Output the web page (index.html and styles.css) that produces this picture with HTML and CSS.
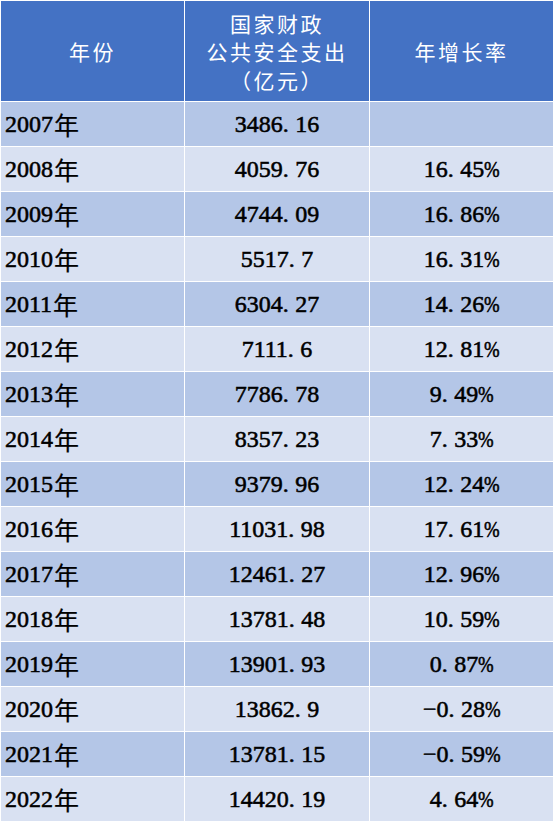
FILE: index.html
```html
<!DOCTYPE html>
<html lang="zh-CN">
<head>
<meta charset="utf-8">
<title>国家财政公共安全支出</title>
<link rel="stylesheet" href="styles.css">
</head>
<body>
<div class="sheet">
  <div class="hd">年份</div>
  <div class="hd hd-multi"><span class="ln">国家财政</span><span class="ln">公共安全支出</span><span class="ln">（亿元）</span></div>
  <div class="hd">年增长率</div>

  <div class="c y odd">2007<span class="cn">年</span></div><div class="c n odd">3486<span class="dot">.</span>16</div><div class="c n odd"></div>
  <div class="c y even">2008<span class="cn">年</span></div><div class="c n even">4059<span class="dot">.</span>76</div><div class="c n even">16<span class="dot">.</span>45<span class="pct">%</span></div>
  <div class="c y odd">2009<span class="cn">年</span></div><div class="c n odd">4744<span class="dot">.</span>09</div><div class="c n odd">16<span class="dot">.</span>86<span class="pct">%</span></div>
  <div class="c y even">2010<span class="cn">年</span></div><div class="c n even">5517<span class="dot">.</span>7</div><div class="c n even">16<span class="dot">.</span>31<span class="pct">%</span></div>
  <div class="c y odd">2011<span class="cn">年</span></div><div class="c n odd">6304<span class="dot">.</span>27</div><div class="c n odd">14<span class="dot">.</span>26<span class="pct">%</span></div>
  <div class="c y even">2012<span class="cn">年</span></div><div class="c n even">7111<span class="dot">.</span>6</div><div class="c n even">12<span class="dot">.</span>81<span class="pct">%</span></div>
  <div class="c y odd">2013<span class="cn">年</span></div><div class="c n odd">7786<span class="dot">.</span>78</div><div class="c n odd">9<span class="dot">.</span>49<span class="pct">%</span></div>
  <div class="c y even">2014<span class="cn">年</span></div><div class="c n even">8357<span class="dot">.</span>23</div><div class="c n even">7<span class="dot">.</span>33<span class="pct">%</span></div>
  <div class="c y odd">2015<span class="cn">年</span></div><div class="c n odd">9379<span class="dot">.</span>96</div><div class="c n odd">12<span class="dot">.</span>24<span class="pct">%</span></div>
  <div class="c y even">2016<span class="cn">年</span></div><div class="c n even">11031<span class="dot">.</span>98</div><div class="c n even">17<span class="dot">.</span>61<span class="pct">%</span></div>
  <div class="c y odd">2017<span class="cn">年</span></div><div class="c n odd">12461<span class="dot">.</span>27</div><div class="c n odd">12<span class="dot">.</span>96<span class="pct">%</span></div>
  <div class="c y even">2018<span class="cn">年</span></div><div class="c n even">13781<span class="dot">.</span>48</div><div class="c n even">10<span class="dot">.</span>59<span class="pct">%</span></div>
  <div class="c y odd">2019<span class="cn">年</span></div><div class="c n odd">13901<span class="dot">.</span>93</div><div class="c n odd">0<span class="dot">.</span>87<span class="pct">%</span></div>
  <div class="c y even">2020<span class="cn">年</span></div><div class="c n even">13862<span class="dot">.</span>9</div><div class="c n even"><span class="neg">−</span>0<span class="dot">.</span>28<span class="pct">%</span></div>
  <div class="c y odd">2021<span class="cn">年</span></div><div class="c n odd">13781<span class="dot">.</span>15</div><div class="c n odd"><span class="neg">−</span>0<span class="dot">.</span>59<span class="pct">%</span></div>
  <div class="c y even">2022<span class="cn">年</span></div><div class="c n even">14420<span class="dot">.</span>19</div><div class="c n even">4<span class="dot">.</span>64<span class="pct">%</span></div>
</div>
</body>
</html>
```
FILE: styles.css
```css
html, body {
  margin: 0;
  padding: 0;
  background: #ffffff;
}

.sheet {
  display: grid;
  grid-template-columns: 183px 184px 183px;
  grid-template-rows: 100px repeat(16, 44px);
  gap: 1px;
  padding: 1px 0 1px 1px;
  width: 552px;
  background: #ffffff;
}

.hd {
  background: #4472c4;
  color: #ffffff;
  font-family: "Noto Sans CJK SC", sans-serif;
  font-size: 21px;
  letter-spacing: 2.5px;
  display: flex;
  align-items: center;
  justify-content: center;
  text-align: center;
}

.hd-multi {
  flex-direction: column;
  padding-top: 1px;
}

.ln {
  display: block;
  height: 28.5px;
  line-height: 28.5px;
  overflow: visible;
}

.c {
  display: flex;
  align-items: center;
  font-family: "Liberation Serif", "Noto Sans CJK SC", serif;
  font-size: 24px;
  color: #000000;
  -webkit-text-stroke: 0.55px #000000;
  white-space: nowrap;
}

.odd {
  background: #b4c6e7;
}

.even {
  background: #d9e1f2;
}

.y {
  padding-left: 4px;
  justify-content: flex-start;
}

.n {
  justify-content: center;
}

.cn {
  font-family: "Noto Sans CJK SC", sans-serif;
  font-size: 25px;
  margin-left: 1px;
  -webkit-text-stroke: 0.2px #000000;
}

.dot {
  letter-spacing: 0.27em;
}

.pct {
  display: inline-block;
  width: 0.62em;
  transform: scaleX(0.78);
  transform-origin: left center;
}

.neg {
  display: inline-block;
  width: 0.52em;
  margin-right: 1px;
}
```
